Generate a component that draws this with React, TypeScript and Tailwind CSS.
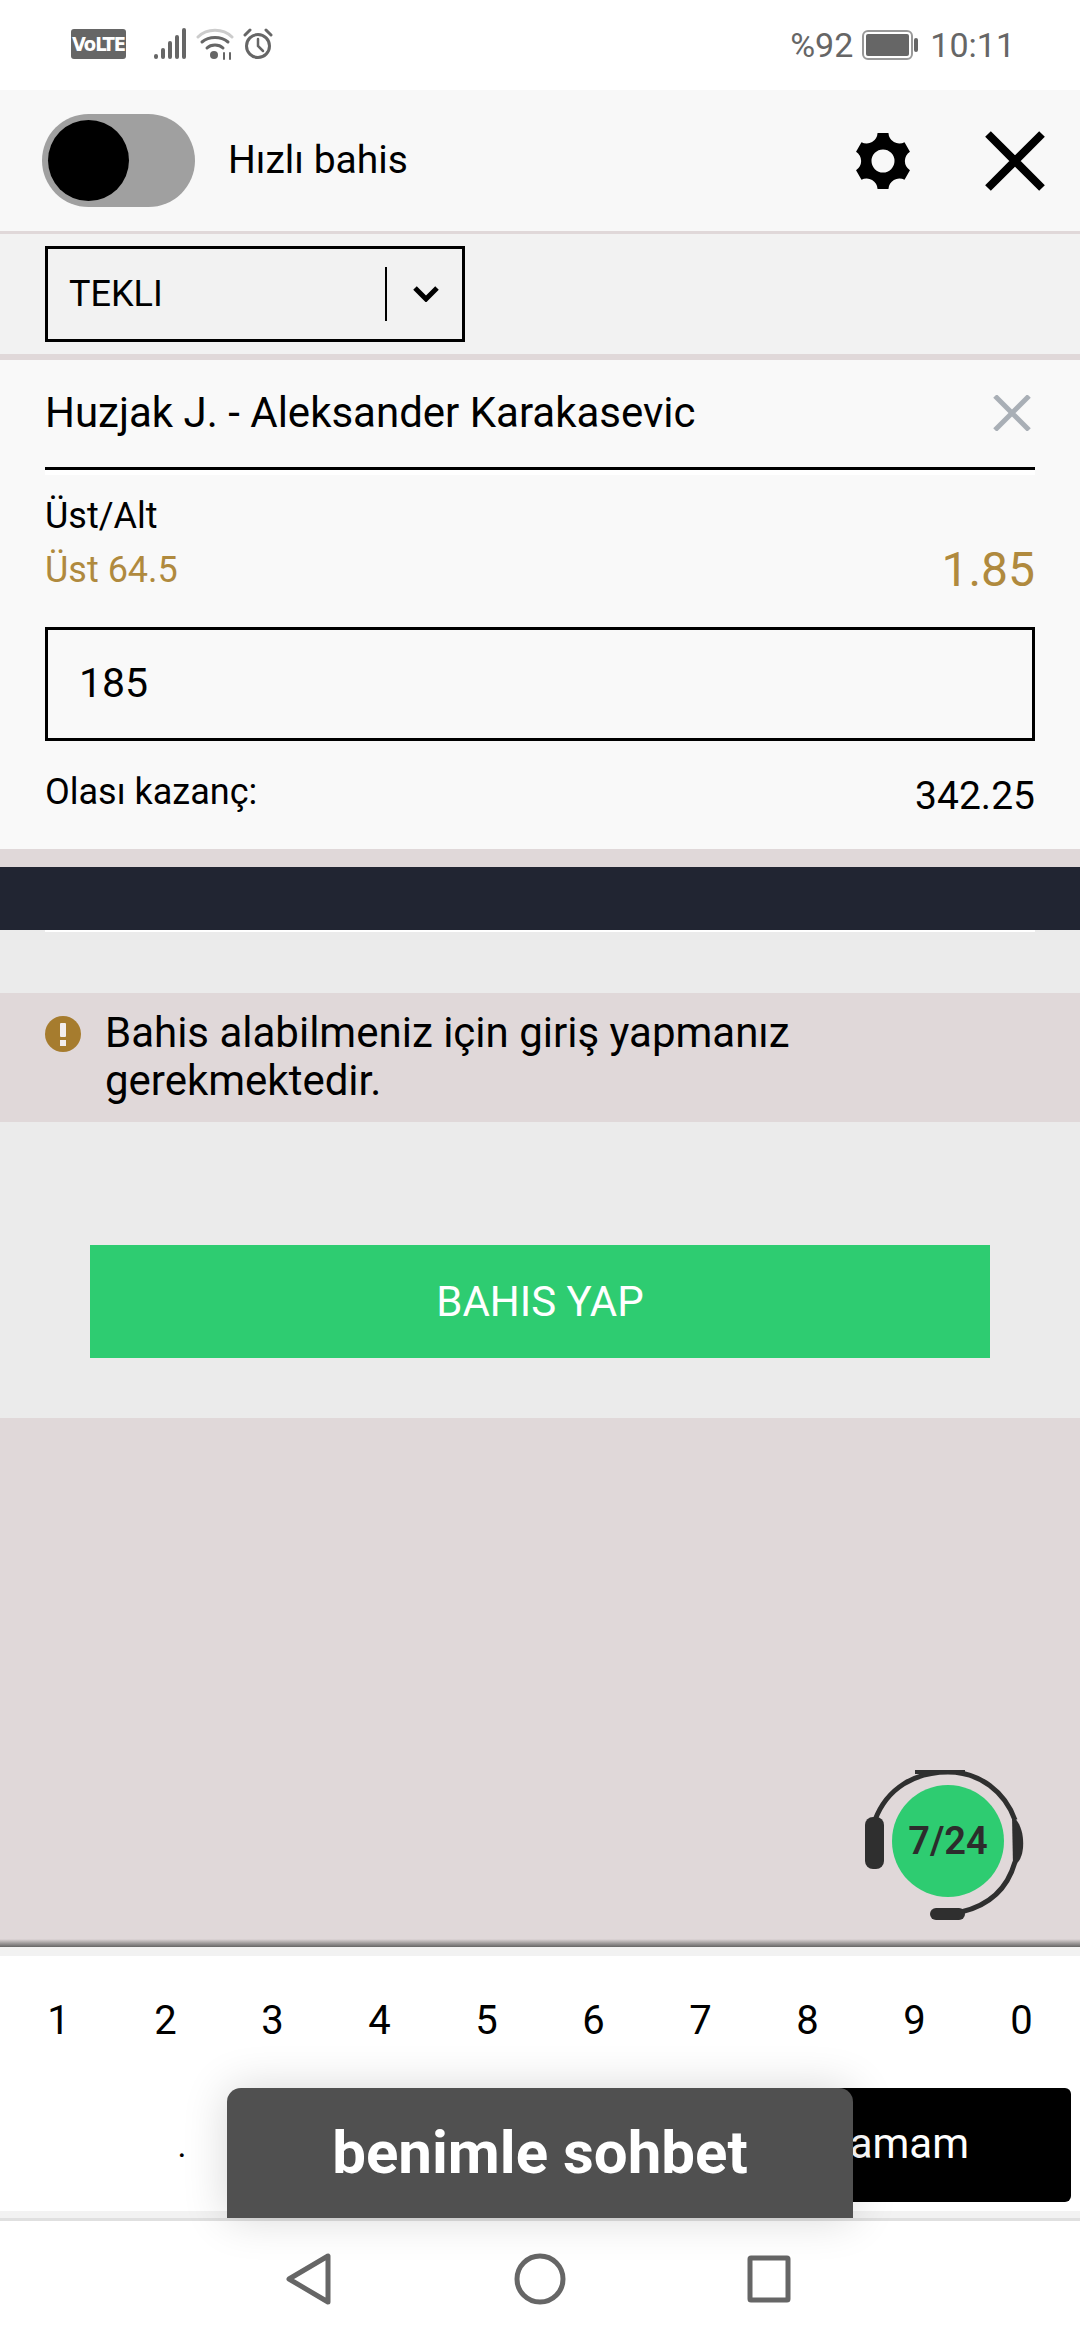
const keys = ["1", "2", "3", "4", "5", "6", "7", "8", "9", "0"];

// cog with flat teeth and scooped notches, same shape as the reference
function gearPath() {
  const r = 28.5;
  const point = (deg: number) => {
    const rad = (deg * Math.PI) / 180;
    return `${(30 + r * Math.cos(rad)).toFixed(2)} ${(30 + r * Math.sin(rad)).toFixed(2)}`;
  };
  let d = "";
  for (let k = 0; k < 6; k++) {
    const a = k * 60 - 90;
    d += `${k === 0 ? "M" : "L"}${point(a - 11)} L${point(a + 11)} A11 11 0 0 0 ${point(a + 49)} `;
  }
  return d + "Z M30 18.5 a11.5 11.5 0 1 0 0 23 a11.5 11.5 0 1 0 0 -23 Z";
}

function StatusBar() {
  return (
    <div className="h-[90px] bg-white flex items-center justify-between pl-[71px] pr-[65px] text-[#666666]">
      <div className="flex items-center -mt-[2px]">
        <div className="w-[55px] h-[30px] rounded-[3px] bg-[#666666] text-white text-[20px] font-bold leading-[30px] text-center font-['DejaVu_Sans_Condensed','Liberation_Sans',sans-serif] tracking-tighter">
          VoLTE
        </div>
        <svg className="ml-[27px]" width="34" height="32" viewBox="0 0 34 32" fill="#666666">
          <rect x="1" y="26" width="4" height="5" rx="2" />
          <rect x="8" y="20" width="4" height="11" rx="2" />
          <rect x="15" y="13" width="4" height="18" rx="2" />
          <rect x="22" y="7" width="4" height="24" rx="2" />
          <rect x="29" y="0" width="4" height="31" rx="2" />
        </svg>
        <svg className="ml-[9px]" width="38" height="32" viewBox="0 0 38 32" fill="none" strokeLinecap="round">
          <path d="M2 9 C11 0 27 0 36 9" stroke="#cccccc" strokeWidth="3" />
          <path d="M6 14 C13 8 25 8 32 14" stroke="#666666" strokeWidth="3" />
          <path d="M11 20 C15 16 23 16 27 20" stroke="#666666" strokeWidth="3" />
          <circle cx="18" cy="27" r="4" fill="#666666" />
          <path d="M28 25v6M34 25v6" stroke="#666666" strokeWidth="2" />
        </svg>
        <svg className="ml-[8px]" width="32" height="32" viewBox="0 0 32 32" fill="none" stroke="#666666" strokeLinecap="round">
          <circle cx="16" cy="18" r="11.5" strokeWidth="3" />
          <path d="M16 11v7l5 5" strokeWidth="2.5" />
          <path d="M3 7l5-5M29 7l-5-5" strokeWidth="3" />
        </svg>
      </div>
      <div className="flex items-center text-[34px] leading-none">
        <span>%92</span>
        <svg className="ml-[9px]" width="57" height="30" viewBox="0 0 57 30">
          <rect x="1" y="1" width="49" height="28" rx="5" fill="none" stroke="#999999" strokeWidth="2" />
          <rect x="4" y="4" width="43" height="22" rx="2" fill="#666666" />
          <rect x="52" y="8" width="4" height="14" rx="2" fill="#666666" />
        </svg>
        <span className="ml-[11px]">10:11</span>
      </div>
    </div>
  );
}

function Header() {
  return (
    <div className="h-[144px] bg-[#f8f8f8] border-b-[3px] border-[#e0d8d9] flex items-center pl-[42px] pr-[35px]">
      <div className="w-[153px] h-[93px] rounded-full bg-[#a0a0a0] flex items-center pl-[6px]">
        <div className="w-[81px] h-[81px] rounded-full bg-black" />
      </div>
      <span className="ml-[33px] text-[39px] text-black">Hızlı bahis</span>
      <svg className="ml-auto" width="60" height="60" viewBox="0 0 60 60" fill="#000000" fillRule="evenodd">
        <path d={gearPath()} />
      </svg>
      <svg className="ml-[72px]" width="60" height="60" viewBox="0 0 60 60" fill="none" stroke="#000000" strokeWidth="8">
        <path d="M3 3l54 54M57 3L3 57" />
      </svg>
    </div>
  );
}

function SelectRow() {
  return (
    <div className="h-[120px] bg-[#f2f2f2] pt-[12px] pl-[45px]">
      <div className="w-[420px] h-[96px] border-[3px] border-black flex items-center pl-[21px]">
        <span className="text-[36px] text-black w-[316px]">TEKLI</span>
        <div className="w-[2px] h-[54px] bg-black" />
        <svg className="ml-[26px]" width="26" height="16" viewBox="0 0 26 16" fill="none" stroke="#000000" strokeWidth="5">
          <path d="M2 2l11 11L24 2" />
        </svg>
      </div>
    </div>
  );
}

function BetCard() {
  return (
    <div className="h-[489px] bg-[#f9f9f9] px-[45px] text-black">
      <div className="h-[110px] border-b-[3px] border-black flex items-center justify-between pb-[2px]">
        <span className="text-[42px]">Huzjak J. - Aleksander Karakasevic</span>
        <svg className="mr-[4px]" width="38" height="36" viewBox="0 0 38 36" fill="none" stroke="#a9afb6" strokeWidth="5">
          <path d="M2 1l34 34M36 1L2 35" />
        </svg>
      </div>
      <div className="h-[5px] bg-white" />
      <div className="mt-[21px] text-[36px] leading-[40px]">Üst/Alt</div>
      <div className="mt-[12px] flex items-center justify-between text-[#b08a3e]">
        <span className="text-[36px] leading-[44px]">Üst 64.5</span>
        <span className="text-[48px] leading-[44px]">1.85</span>
      </div>
      <div className="mt-[35px] h-[114px] border-[3px] border-black flex items-center pl-[31px] text-[41px] pb-[1px]">185</div>
      <div className="mt-[26px] flex justify-between text-[36px] leading-[50px]">
        <span>Olası kazanç:</span>
        <span className="pt-[4px] text-[39px]">342.25</span>
      </div>
    </div>
  );
}

function LoginNotice() {
  return (
    <div className="h-[129px] bg-[#e0d8d9] flex pl-[45px] pt-[16px]">
      <svg className="mt-[7px] shrink-0" width="36" height="36" viewBox="0 0 36 36">
        <circle cx="18" cy="18" r="18" fill="#a67c2e" />
        <rect x="15" y="7" width="6" height="14" rx="1" fill="#f2eeee" />
        <rect x="15" y="24" width="6" height="6" fill="#f2eeee" />
      </svg>
      <p className="ml-[24px] text-[42px] leading-[48px] text-black">
        Bahis alabilmeniz için giriş yapmanız
        <br />
        gerekmektedir.
      </p>
    </div>
  );
}

function SupportBadge() {
  return (
    <div className="absolute left-[865px] top-[1770px] w-[160px] h-[150px]">
      <svg className="absolute inset-0" width="160" height="150" viewBox="0 0 160 150" fill="none">
        <path d="M10 50 C22 18 50 2 83 2 C115 2 140 22 150 50" stroke="#2f2f2f" strokeWidth="5" />
        <path d="M50 0h50v4H50z" fill="#2f2f2f" />
        <rect x="0" y="47" width="19" height="52" rx="8" fill="#2f2f2f" />
        <path d="M147 46 C156 52 159 66 158 78 C157 88 153 94 148 96Z" fill="#2f2f2f" />
        <path d="M150 92 C142 120 122 136 96 142" stroke="#2f2f2f" strokeWidth="5" />
        <rect x="65" y="138" width="35" height="12" rx="6" fill="#2f2f2f" />
      </svg>
      <div className="absolute left-[27px] top-[15px] w-[112px] h-[112px] rounded-full bg-[#2ecc71] flex items-center justify-center text-[38px] font-semibold text-[#2c2c2c]">
        7/24
      </div>
    </div>
  );
}

function Keyboard() {
  return (
    <div className="h-[255px] bg-white">
      <div className="h-[132px] pl-[5px] pr-[5px] flex items-center pb-[2px]">
        {keys.map((key) => (
          <div key={key} className="w-[107px] text-center text-[40px] text-black">
            {key}
          </div>
        ))}
      </div>
      <div className="h-[114px] flex pr-[9px]">
        <div className="w-[364px] text-center text-[34px] leading-[114px] text-black">.</div>
        <div className="flex-1 ml-[361px] bg-black rounded-[6px] flex items-center justify-center text-[42px] text-white pb-[4px]">
          Tamam
        </div>
      </div>
    </div>
  );
}

function NavBar() {
  return (
    <div className="h-[119px] bg-white flex items-start pt-[32px] pl-[286px]">
      <svg width="46" height="52" viewBox="0 0 46 52" fill="none" stroke="#666666" strokeWidth="5" strokeLinejoin="round">
        <path d="M42 3v46L3 26z" />
      </svg>
      <svg className="ml-[182px]" width="52" height="52" viewBox="0 0 52 52" fill="none" stroke="#666666" strokeWidth="5">
        <circle cx="26" cy="26" r="23" />
      </svg>
      <svg className="ml-[181px] mt-[2px]" width="44" height="48" viewBox="0 0 44 48" fill="none" stroke="#666666" strokeWidth="5" strokeLinejoin="round">
        <rect x="3" y="3" width="38" height="42" rx="1" />
      </svg>
    </div>
  );
}

export default function App() {
  return (
    <div className="relative w-[1080px] h-[2340px] overflow-hidden bg-white font-['Roboto',sans-serif]">
      <StatusBar />
      <Header />
      <SelectRow />
      <div className="h-[6px] bg-[#e0d8d9]" />
      <BetCard />
      <div className="h-[18px] bg-[#e0d8d9]" />
      <div className="h-[63px] bg-[#212532]" />
      <div className="h-[63px] bg-[#ebebeb]">
        <div className="h-[2px] mx-[45px] bg-white" />
      </div>
      <LoginNotice />
      <div className="h-[296px] bg-[#ebebeb] pt-[123px] px-[90px]">
        <div className="h-[113px] bg-[#2ecc71] flex items-center justify-center text-[42px] text-white">BAHIS YAP</div>
      </div>
      <div className="h-[529px] bg-[#e0d8d9] flex flex-col justify-end">
        <div className="h-[8px] bg-gradient-to-b from-[#e0d8d9] to-[#666666]" />
      </div>
      <div className="h-[9px] bg-[#f2f2f2]" />
      <Keyboard />
      <div className="h-[7px] bg-[#f2f2f2]" />
      <div className="h-[3px] bg-[#e0e0e0]" />
      <NavBar />
      <SupportBadge />
      <div className="absolute left-[227px] top-[2088px] w-[626px] h-[130px] bg-[#505050] rounded-t-[14px] shadow-[0_0_45px_rgba(0,0,0,0.16)] flex items-center justify-center text-[60px] font-bold text-white">
        benimle sohbet
      </div>
    </div>
  );
}
